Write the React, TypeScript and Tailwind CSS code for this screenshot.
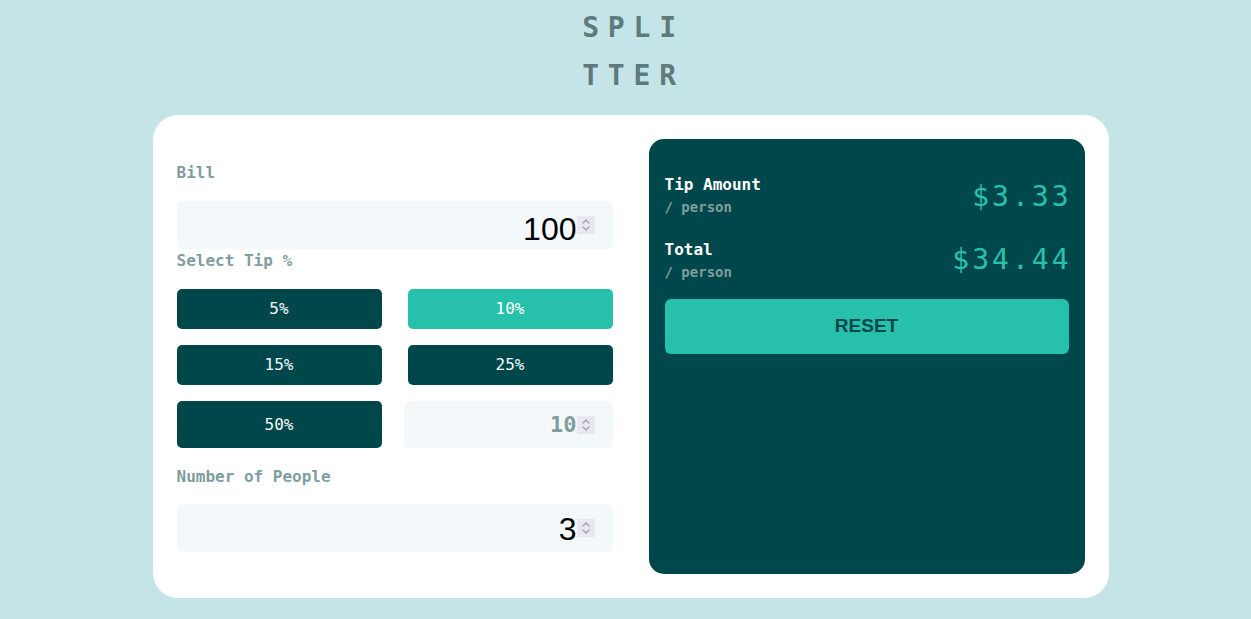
import React from "react";

const mono = { fontFamily: '"DejaVu Sans Mono", "Liberation Mono", monospace' };
const sans = { fontFamily: '"Liberation Sans", Arial, sans-serif' };

function Spinner() {
  return (
    <div className="w-[18px] h-[18px] bg-[#e9e7ee] flex flex-col items-center justify-center shrink-0">
      <svg width="10" height="14" viewBox="0 0 10 14" fill="none" stroke="#a19cab" strokeWidth="1.2" strokeLinecap="round" strokeLinejoin="round">
        <path d="M2 5 L5 2 L8 5" />
        <path d="M2 9 L5 12 L8 9" />
      </svg>
    </div>
  );
}

function Label({ children }: { children: React.ReactNode }) {
  return (
    <div className="text-[16px] leading-[24px] font-bold text-[#7f9d9f]" style={mono}>
      {children}
    </div>
  );
}

function NumInput({ value, shift }: { value: string; shift: string }) {
  return (
    <div className="h-12 w-full bg-[#f3f9fa] rounded-[6px] flex items-center justify-end pr-[18px]">
      <div className={`flex items-center ${shift}`}>
        <span className="text-[32px] leading-[36px] text-black" style={sans}>
          {value}
        </span>
      </div>
      <Spinner />
    </div>
  );
}

function TipBtn({ label, active, tall }: { label: string; active?: boolean; tall?: boolean }) {
  return (
    <div
      className={`w-[205px] ${tall ? "h-[47px]" : "h-10"} rounded-[5px] flex items-center justify-center text-[16px] ${
        active ? "bg-[#26c0ab] text-white" : "bg-[#00474b] text-[#f3f9fa]"
      }`}
      style={mono}
    >
      {label}
    </div>
  );
}

export default function App() {
  return (
    <div className="min-h-screen bg-[#c5e4e7] flex flex-col items-center pl-[10px]">
      <div
        className="pt-[4px] pl-[6px] text-center text-[28px] leading-[48px] font-bold tracking-[8.8px] text-[#5e7a7d]"
        style={mono}
      >
        SPLI
        <br />
        TTER
      </div>
      <div className="mt-[15px] w-[956px] h-[483px] bg-white rounded-[25px] p-6 flex gap-9">
        <div className="w-[436px] pt-[22px] flex flex-col">
          <Label>Bill</Label>
          <div className="mt-4">
            <NumInput value="100" shift="mt-[8px]" />
          </div>
          <Label>Select Tip %</Label>
          <div className="mt-4 flex flex-col gap-4">
            <div className="flex justify-between">
              <TipBtn label="5%" />
              <TipBtn label="10%" active />
            </div>
            <div className="flex justify-between">
              <TipBtn label="15%" />
              <TipBtn label="25%" />
            </div>
            <div className="flex justify-between">
              <TipBtn label="50%" tall />
              <div className="w-[209px] h-[47px] bg-[#f3f9fa] rounded-[6px] flex items-center justify-end pr-[18px]">
                <span className="text-[22px] leading-[28px] font-bold text-[#7f9d9f]" style={mono}>
                  10
                </span>
                <Spinner />
              </div>
            </div>
          </div>
          <div className="mt-[17px]">
            <Label>Number of People</Label>
          </div>
          <div className="mt-[15px]">
            <NumInput value="3" shift="mt-[2px]" />
          </div>
        </div>
        <div className="w-[436px] h-[435px] bg-[#00474b] rounded-[15px] px-4 pt-[34px] flex flex-col">
          <div className="flex justify-between items-center">
            <div style={mono}>
              <div className="text-[16px] leading-[24px] font-bold text-white">Tip Amount</div>
              <div className="text-[14px] leading-[20px] font-bold text-[#7f9d9f]">/ person</div>
            </div>
            <div className="text-[28px] leading-[36px] tracking-[3px] mr-[-3px] mt-[3px] text-[#26c2ae]" style={mono}>
              $3.33
            </div>
          </div>
          <div className="mt-[21px] flex justify-between items-center">
            <div style={mono}>
              <div className="text-[16px] leading-[24px] font-bold text-white">Total</div>
              <div className="text-[14px] leading-[20px] font-bold text-[#7f9d9f]">/ person</div>
            </div>
            <div className="text-[28px] leading-[36px] tracking-[3px] mr-[-3px] text-[#26c2ae]" style={mono}>
              $34.44
            </div>
          </div>
          <div
            className="mt-[17px] h-[55px] rounded-[6px] bg-[#26c0ab] flex items-center justify-center text-[19px] font-bold text-[#00474b]"
            style={sans}
          >
            RESET
          </div>
        </div>
      </div>
    </div>
  );
}
